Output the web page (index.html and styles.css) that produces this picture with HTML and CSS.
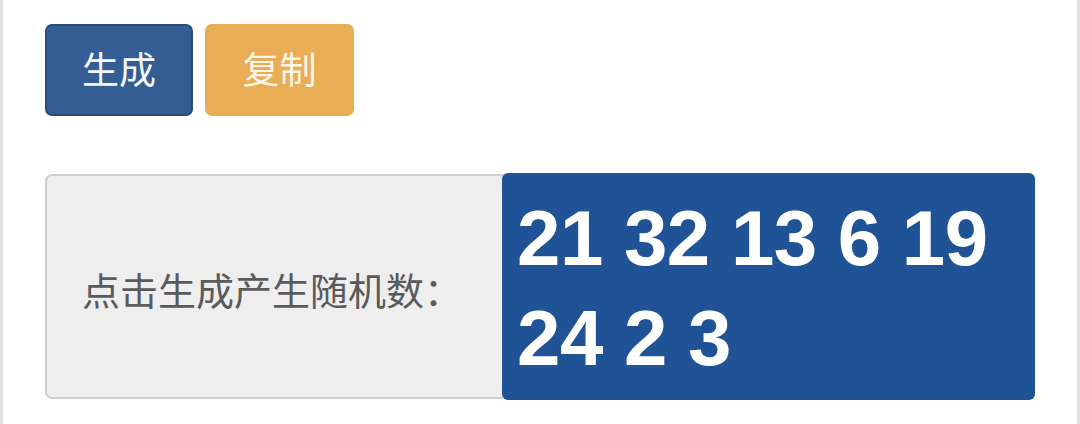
FILE: index.html
```html
<!DOCTYPE html>
<html lang="zh">
<head>
<meta charset="utf-8">
<link rel="stylesheet" href="styles.css">
</head>
<body>
<div class="page">
  <div class="actions">
    <button class="btn btn-primary">生成</button>
    <button class="btn btn-warning">复制</button>
  </div>
  <div class="input-group">
    <span class="addon">点击生成产生随机数：</span>
    <div class="result">21 32 13 6 19 24 2 3</div>
  </div>
</div>
</body>
</html>
```

FILE: styles.css
```css
html, body {
  margin: 0;
  padding: 0;
  background: #ffffff;
}
.page {
  box-sizing: border-box;
  width: 1080px;
  height: 424px;
  border-left: 3px solid #e2e2e2;
  border-right: 3px solid #e2e2e2;
  padding: 24px 42px 0 42px;
  font-family: "Noto Sans CJK SC", "Liberation Sans", sans-serif;
}
.actions {
  display: flex;
  gap: 12px;
}
.btn {
  box-sizing: border-box;
  height: 92px;
  padding: 0 0 4px 0;
  font-family: "Noto Sans CJK SC", sans-serif;
  font-size: 37px;
  line-height: 1;
  border-radius: 7px;
  cursor: pointer;
}
.btn-primary {
  width: 148px;
  background: #345e93;
  border: 2px solid #284b77;
  color: #f4f6fa;
}
.btn-warning {
  width: 149px;
  background: #e9ad55;
  border: 2px solid #e9ad55;
  color: #fdf5e6;
}
.input-group {
  display: flex;
  margin-top: 57px;
  align-items: stretch;
}
.addon {
  display: flex;
  align-items: center;
  margin: 1px 0;
  padding: 4px 41px 0 35px;
  background: #eeeeee;
  border: 2px solid #cfcfcf;
  border-right: none;
  border-radius: 7px 0 0 7px;
  font-size: 38px;
  color: #5a5a5a;
  white-space: nowrap;
}
.result {
  flex: 1;
  margin-left: -1px;
  background: #1f5396;
  border-radius: 6px;
  padding: 15px 15px 12px 15px;
  color: #ffffff;
  font-family: "Liberation Sans", Arial, sans-serif;
  font-weight: bold;
  font-size: 78px;
  line-height: 100px;
  letter-spacing: -0.5px;
}
```
